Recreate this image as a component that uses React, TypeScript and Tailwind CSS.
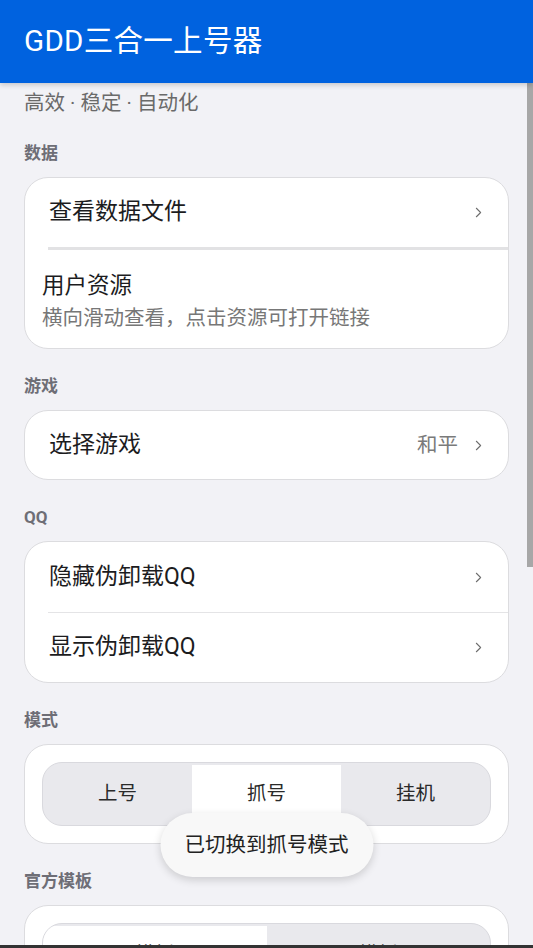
import { ChevronRight } from 'lucide-react';

const font = { fontFamily: 'Roboto, "Noto Sans CJK SC", "Noto Sans", sans-serif' };

function SectionLabel({ children }: { children: React.ReactNode }) {
  return (
    <div className="mt-[25px] mb-3 h-6 leading-6 text-[17px] font-bold text-[#6e6e76]">{children}</div>
  );
}

function Chevron() {
  return <ChevronRight className="w-[17px] h-[17px] text-[#6f6f6f]" strokeWidth={1.5} />;
}

function Row({ title, value, h = 'h-[68px]' }: { title: string; value?: string; h?: string }) {
  return (
    <div className={h + ' flex items-center justify-between pl-6 pr-[21px]'}>
      <span className="text-[23px] text-[#1c1c1e]">{title}</span>
      <div className="flex items-center gap-[12px]">
        {value && <span className="text-[20.5px] text-[#7a7a7a]">{value}</span>}
        <Chevron />
      </div>
    </div>
  );
}

function Segmented({ items, active }: { items: string[]; active: number }) {
  return (
    <div className="flex h-16 py-[2px] rounded-[20px] border border-[#d9d9de] bg-[#e9e9ed] overflow-hidden">
      {items.map((it, i) => (
        <div
          key={i}
          className={
            'flex-1 flex items-center justify-center text-[19.5px] text-[#2a2a2a] ' +
            (i === active ? 'bg-white' : '')
          }
        >
          {it}
        </div>
      ))}
    </div>
  );
}

export default function App() {
  return (
    <div className="relative h-[948px] w-[533px] overflow-hidden bg-[#f2f2f6] flex flex-col" style={font}>
      <header className="h-[83px] shrink-0 bg-[#0062df] flex items-center px-6 shadow-[0_2px_5px_rgba(0,0,0,0.18)] z-10">
        <h1 className="text-[29.5px] text-white font-normal tracking-[0.3px]">GDD三合一上号器</h1>
      </header>

      <main className="flex-1 overflow-hidden px-6 pt-[6px]">
        <p className="h-7 leading-7 text-[20.5px] text-[#6a6a6a]">高效 · 稳定 · 自动化</p>

        <div className="mt-[-1px]">
          <SectionLabel>数据</SectionLabel>
        </div>
        <div className="rounded-[24px] border border-[#dcdcdf] bg-white overflow-hidden">
          <Row title="查看数据文件" h="h-[69px]" />
          <div className="ml-[23px] h-[3px] bg-[#e2e2e4]" />
          <div className="h-[98px] pl-[17px] pt-[19px]">
            <div className="text-[22.5px] leading-[33px] text-[#1c1c1e]">用户资源</div>
            <div className="text-[20.5px] leading-[33px] text-[#777]">横向滑动查看，点击资源可打开链接</div>
          </div>
        </div>

        <SectionLabel>游戏</SectionLabel>
        <div className="rounded-[24px] border border-[#dcdcdf] bg-white overflow-hidden">
          <Row title="选择游戏" value="和平" />
        </div>

        <SectionLabel>QQ</SectionLabel>
        <div className="rounded-[24px] border border-[#dcdcdf] bg-white overflow-hidden">
          <Row title="隐藏伪卸载QQ" h="h-[70px]" />
          <div className="ml-[23px] h-px bg-[#e4e4e6]" />
          <Row title="显示伪卸载QQ" h="h-[69px]" />
        </div>

        <SectionLabel>模式</SectionLabel>
        <div className="rounded-[24px] border border-[#dcdcdf] bg-white p-[17px]">
          <Segmented items={['上号', '抓号', '挂机']} active={1} />
        </div>

        <SectionLabel>官方模板</SectionLabel>
        <div className="rounded-[24px] border border-[#dcdcdf] bg-white p-[17px]">
          <Segmented items={['模板', '模板']} active={0} />
        </div>
      </main>

      {/* scrollbar */}
      <div className="absolute right-0 top-[83px] w-[6px] h-[484px] bg-[#a7a7a7]" />

      {/* toast */}
      <div className="absolute left-1/2 -translate-x-1/2 top-[813px] h-16 w-[213px] rounded-full bg-[#f8f8f8] shadow-[0_3px_8px_rgba(0,0,0,0.16)] flex items-center justify-center text-[20.5px] text-[#222]">
        已切换到抓号模式
      </div>

      <div className="absolute bottom-0 left-0 right-0 h-[3px] bg-[#333]" />
    </div>
  );
}
